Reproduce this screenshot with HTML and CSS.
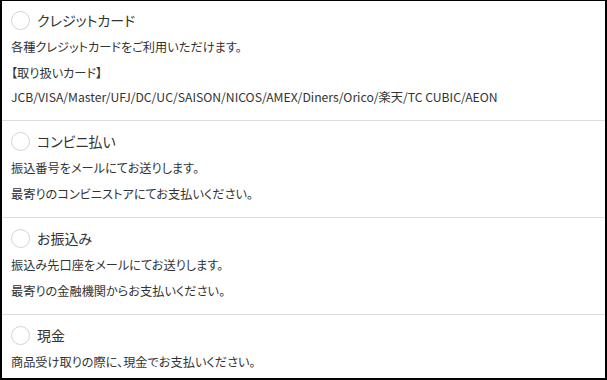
FILE: index.html
```html
<!DOCTYPE html>
<html lang="ja">
<head>
    <meta charset="UTF-8">
    <meta name="viewport" content="width=device-width, initial-scale=1.0">
    <title>お支払い方法</title>
    <link rel="stylesheet" href="styles.css">
</head>
<body>
    <div class="pagamento">
        <section class="metodo">
            <label class="titulo">
                <input type="radio" name="pagamento" value="credit">
                <span>クレジットカード</span>
            </label>
            <div class="texto">
                <p>各種クレジットカードをご利用いただけます。</p>
                <p>【取り扱いカード】</p>
                <p class="cartoes">JCB/VISA/Master/UFJ/DC/UC/SAISON/NICOS/AMEX/Diners/Orico/楽天/TC CUBIC/AEON</p>
            </div>
        </section>
        <section class="metodo">
            <label class="titulo">
                <input type="radio" name="pagamento" value="conveni">
                <span>コンビニ払い</span>
            </label>
            <div class="texto">
                <p>振込番号をメールにてお送りします。</p>
                <p>最寄りのコンビニストアにてお支払いください。</p>
            </div>
        </section>
        <section class="metodo">
            <label class="titulo">
                <input type="radio" name="pagamento" value="furikomi">
                <span>お振込み</span>
            </label>
            <div class="texto">
                <p>振込み先口座をメールにてお送りします。</p>
                <p>最寄りの金融機関からお支払いください。</p>
            </div>
        </section>
        <section class="metodo">
            <label class="titulo">
                <input type="radio" name="pagamento" value="genkin">
                <span>現金</span>
            </label>
            <div class="texto">
                <p>商品受け取りの際に、現金でお支払いください。</p>
            </div>
        </section>
    </div>
</body>
</html>
```

FILE: styles.css
```css
* {
    font-family: "Noto Sans CJK JP", sans-serif;
    box-sizing: border-box;
}
body {
    margin: 0;
    background: #fff;
}
.pagamento {
    width: 607px;
    height: 380px;
    border: 2px solid #000;
    border-top-width: 1px;
    overflow: hidden;
}
.metodo {
    padding: 8px 9px 10px;
    border-top: 1px solid #dcdcdc;
}
.metodo:first-child {
    padding-top: 7px;
    border-top: none;
}
.titulo {
    display: flex;
    align-items: center;
    gap: 7px;
    height: 24px;
    font-size: 14px;
    color: #333;
    font-feature-settings: "palt";
}
.titulo input {
    appearance: none;
    -webkit-appearance: none;
    margin: 0;
    width: 19px;
    height: 19px;
    border: 1px solid #d4d4d4;
    border-radius: 50%;
    background: #fff;
}
.texto {
    margin-top: 2px;
}
.texto p {
    margin: 0;
    font-size: 12.2px;
    line-height: 26px;
    color: #333;
    font-feature-settings: "palt";
}
.texto p.cartoes {
    margin-top: -2px;
}
```
